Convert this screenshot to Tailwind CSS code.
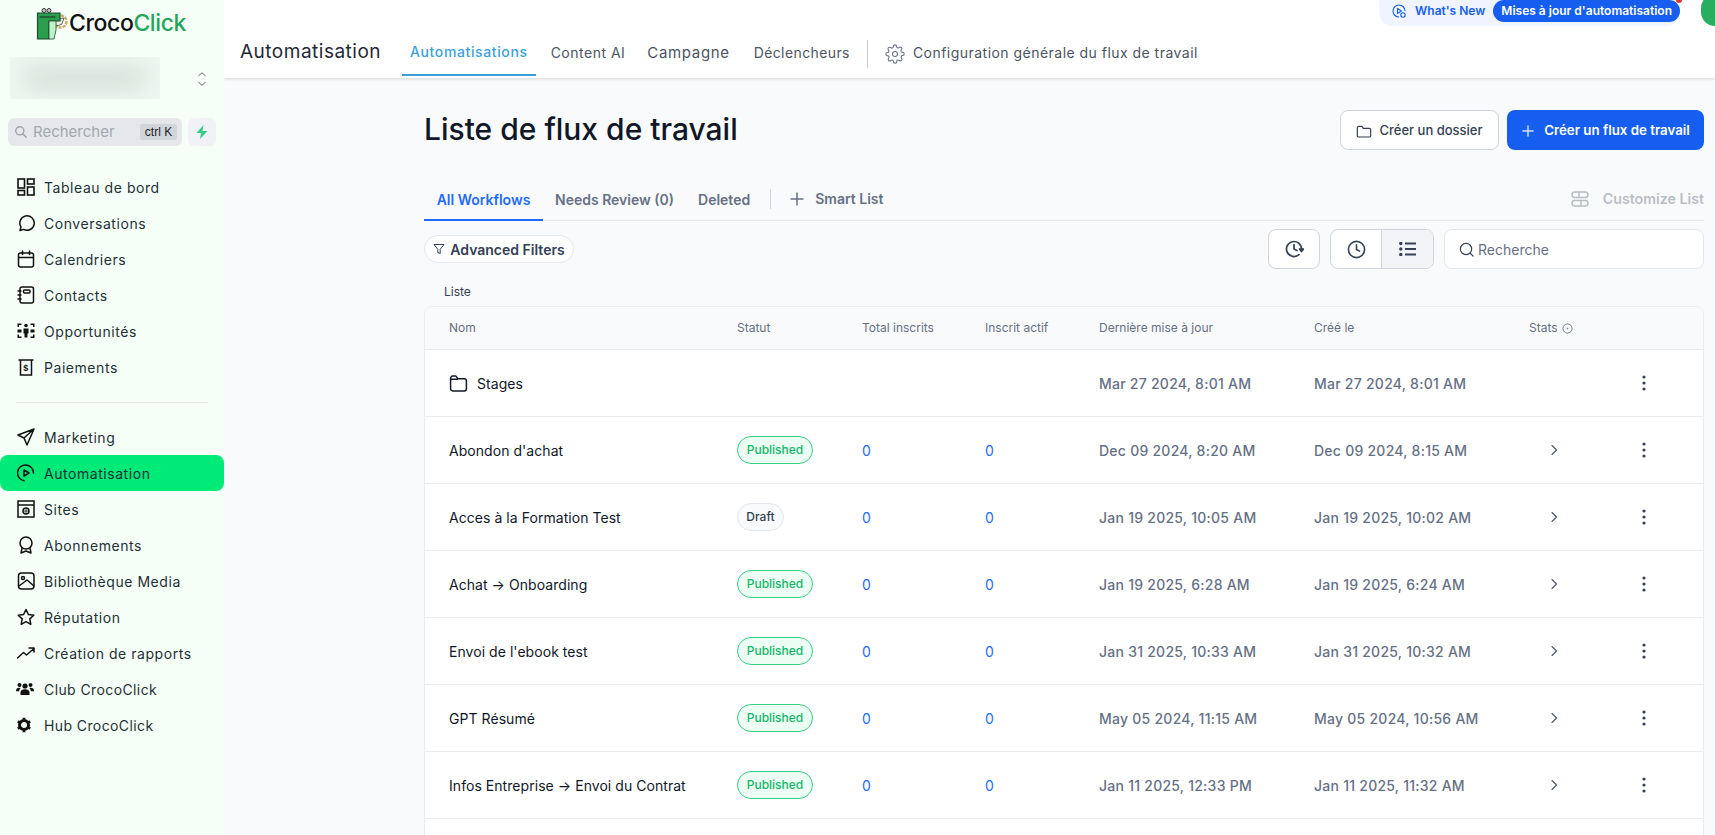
<!DOCTYPE html>
<html lang="fr">
<head>
  <meta charset="UTF-8" />
  <title>Automatisation | CrocoClick</title>
  <script src="https://cdn.jsdelivr.net/npm/@tailwindcss/browser@4"></script>
</head>
<body class="bg-[#f9fafb] font-['Inter',sans-serif] h-[835px] overflow-hidden flex">

  <!-- Sidebar -->
  <aside class="w-[224px] h-[835px] shrink-0 bg-[#f5fff8] text-[#1f3036]">
    <div class="h-[46px] pt-[8px] pl-[36px] flex items-start gap-[1px]">
      <svg width="32" height="32" viewBox="0 0 32 32">
        <circle cx="24.500" cy="13.500" r="6" fill="#fff" stroke="#c9ab6b" stroke-width="2.400" stroke-dasharray="3 1"/>
        <path d="M19 11 L28 10 L26 16 Q22 19 19 17 Z" fill="#ece8dc" stroke="#444" stroke-width="0.800"/>
        <circle cx="8" cy="2.500" r="2" fill="#c8c8c8" stroke="#333"/>
        <circle cx="13" cy="2.500" r="2" fill="#c8c8c8" stroke="#333"/>
        <path d="M1.500 5 H24 V13 H13 V31 H1.500 Z" fill="#2a9d4f" stroke="#1e4d2e" stroke-width="1.200"/>
        <path d="M13 13 H20 V22 L18 31 H13 Z" fill="#bdf3c8" stroke="#1e4d2e" stroke-width="0.800"/>
        <path d="M3.500 9h16" stroke="#1e4d2e" stroke-width="1.400"/>
      </svg>
      <div class="text-[23px] leading-[28px] mt-[1px] font-medium tracking-[-0.4px] text-[#111]">Croco<span class="text-[#25a55c]">Click</span></div>
    </div>

    <!-- Blurred location switcher -->
    <div class="mt-[11px] ml-[10px] flex items-center">
      <div class="w-[150px] h-[42px] bg-[#eef7f1] overflow-hidden flex items-center justify-center">
        <div class="w-[120px] h-[18px] bg-[#cfd8d2] blur-md"></div>
      </div>
      <svg class="ml-[37px] mt-[2px]" width="10" height="16" viewBox="0 0 12 18" fill="none" stroke="#667" stroke-width="1.200" stroke-linecap="round" stroke-linejoin="round"><path d="M2 5l4-3.500L10 5"/><path d="M2 13l4 3.500L10 13"/></svg>
    </div>

    <!-- Search -->
    <div class="mt-[19px] ml-[8px] flex gap-[6px]">
      <div class="w-[174px] h-[28px] bg-[#e5e7eb] rounded-[6px] flex items-center pl-[6px] pr-[5px]">
        <svg width="14" height="14" viewBox="0 0 24 24" fill="none" stroke="#9ca3af" stroke-width="2.400" stroke-linecap="round"><circle cx="10" cy="10" r="7"/><path d="M21 21l-6-6"/></svg>
        <span class="ml-[5px] text-[15px] text-[#a3a8ae]">Rechercher</span>
        <span class="ml-auto h-[16px] w-[37px] bg-[#d1d5db] rounded-[2px] text-[12px] leading-[16px] text-center text-[#222] font-['Liberation_Sans',sans-serif]">ctrl K</span>
      </div>
      <div class="w-[28px] h-[28px] bg-[#f0f2f5] rounded-[6px] flex items-center justify-center">
        <svg width="12" height="14" viewBox="0 0 12 14" fill="#37ca8b"><path d="M7.500 0L0.500 8H5L4 14L11.500 6H6.500Z"/></svg>
      </div>
    </div>

    <!-- Navigation -->
    <nav class="mt-[23px] text-[14px] tracking-[0.55px]">
      <a class="h-[36px] pl-[17px] flex items-center gap-[9px]">
        <svg class="w-[18px] h-[18px] shrink-0" viewBox="0 0 18 18" fill="none" stroke="#111" stroke-width="1.600"><rect x="1" y="1" width="6.500" height="9"/><rect x="10.500" y="1" width="6.500" height="5"/><rect x="1" y="12.500" width="6.500" height="4.500"/><rect x="10.500" y="9" width="6.500" height="8"/></svg>
        Tableau de bord</a>
      <a class="h-[36px] pl-[17px] flex items-center gap-[9px]">
        <svg class="w-[18px] h-[18px] shrink-0" viewBox="0 0 18 18" fill="none" stroke="#111" stroke-width="1.500" stroke-linejoin="round"><path d="M3 16.500l1-3.500a7.200 7.200 0 1 1 2.600 2.400Z"/></svg>
        Conversations</a>
      <a class="h-[36px] pl-[17px] flex items-center gap-[9px]">
        <svg class="w-[18px] h-[18px] shrink-0" viewBox="0 0 18 18" fill="none" stroke="#111" stroke-width="1.500" stroke-linecap="round"><rect x="1.500" y="3" width="15" height="14" rx="2"/><path d="M1.500 7.500h15M5.500 1v3.500M12.500 1v3.500"/></svg>
        Calendriers</a>
      <a class="h-[36px] pl-[17px] flex items-center gap-[9px]">
        <svg class="w-[18px] h-[18px] shrink-0" viewBox="0 0 18 18" fill="none" stroke="#111" stroke-width="1.500" stroke-linecap="round"><rect x="3" y="1" width="13.500" height="16" rx="2"/><rect x="6.500" y="4" width="6.500" height="3" rx="1"/><path d="M1 5h3M1 9h3M1 13h3"/></svg>
        Contacts</a>
      <a class="h-[36px] pl-[17px] flex items-center gap-[9px]">
        <svg class="w-[18px] h-[18px] shrink-0" viewBox="0 0 18 18" fill="#111"><circle cx="9" cy="3.500" r="1.800"/><path d="M6.500 6.500h5v5h-1v4h-3v-4h-1z"/><path d="M0.500 1.500h4v1.500h-2.500v2h-1.500zM13.500 1.500h4v3.500H16V3h-2.500zM0.500 12.500h1.500v2h2.500v1.500h-4zM17.500 12.500H16v2h-2.500v1.500h4z"/><rect x="0.500" y="7.500" width="4" height="3"/><rect x="13.500" y="7.500" width="4" height="3"/></svg>
        Opportunités</a>
      <a class="h-[36px] pl-[17px] flex items-center gap-[9px]">
        <svg class="w-[18px] h-[18px] shrink-0" viewBox="0 0 18 18" fill="none" stroke="#111" stroke-width="1.500"><path d="M1.500 2h15M3.500 2v15h11V2"/><text x="9" y="13" text-anchor="middle" font-size="9" font-weight="700" fill="#111" stroke="none" font-family="Liberation Sans">$</text></svg>
        Paiements</a>

      <div class="mt-[17px] mb-[16px] mx-[16px] h-[1px] bg-[#e2e8e6]"></div>

      <a class="h-[36px] pl-[17px] flex items-center gap-[9px]">
        <svg class="w-[18px] h-[18px] shrink-0" viewBox="0 0 18 18" fill="none" stroke="#111" stroke-width="1.500" stroke-linejoin="round"><path d="M17 1L1 7l6 3 3 7zM17 1L7 10"/></svg>
        Marketing</a>
      <a class="h-[36px] pl-[17px] flex items-center gap-[9px] bg-[#00ea78] rounded-[8px]">
        <svg class="w-[18px] h-[18px] shrink-0" viewBox="0 0 18 18" fill="none" stroke="#111" stroke-width="1.500" stroke-linejoin="round" stroke-linecap="round"><path d="M16.500 9A8 8 0 1 0 7 16.800"/><path d="M7 6l5 3-5 3z"/></svg>
        Automatisation</a>
      <a class="h-[36px] pl-[17px] flex items-center gap-[9px]">
        <svg class="w-[18px] h-[18px] shrink-0" viewBox="0 0 18 18" fill="none" stroke="#111" stroke-width="1.500"><rect x="1" y="1" width="16" height="16"/><path d="M1 5h16"/><circle cx="9" cy="11" r="3"/><path d="M6 11h6M9 8v6" stroke-width="0.800"/></svg>
        Sites</a>
      <a class="h-[36px] pl-[17px] flex items-center gap-[9px]">
        <svg class="w-[18px] h-[18px] shrink-0" viewBox="0 0 18 18" fill="none" stroke="#111" stroke-width="1.500" stroke-linejoin="round"><circle cx="9" cy="7" r="6"/><path d="M5 12l-1 5 5-2 5 2-1-5"/></svg>
        Abonnements</a>
      <a class="h-[36px] pl-[17px] flex items-center gap-[9px]">
        <svg class="w-[18px] h-[18px] shrink-0" viewBox="0 0 18 18" fill="none" stroke="#111" stroke-width="1.500" stroke-linejoin="round"><rect x="1.500" y="1" width="15.500" height="16" rx="3"/><circle cx="6" cy="6" r="1.500"/><path d="M2 14l8-6 7 6"/></svg>
        Bibliothèque Media</a>
      <a class="h-[36px] pl-[17px] flex items-center gap-[9px]">
        <svg class="w-[18px] h-[18px] shrink-0" viewBox="0 0 18 18" fill="none" stroke="#111" stroke-width="1.500" stroke-linejoin="round"><path d="M9 1.500l2.400 5 5.400.7-4 3.700 1 5.400L9 13.700l-4.800 2.600 1-5.400-4-3.700 5.400-.7z"/></svg>
        Réputation</a>
      <a class="h-[36px] pl-[17px] flex items-center gap-[9px]">
        <svg class="w-[18px] h-[18px] shrink-0" viewBox="0 0 18 18" fill="none" stroke="#111" stroke-width="1.500" stroke-linecap="round" stroke-linejoin="round"><path d="M0.500 14l6-5.500 3 2.500 7.500-6.500M12 4h5v4"/></svg>
        Création de rapports</a>
      <a class="h-[36px] pl-[16px] flex items-center gap-[10px] tracking-[0.4px]">
        <svg class="w-[18px] h-[18px] shrink-0" viewBox="0 0 18 18" fill="#111"><circle cx="9" cy="6" r="2.600"/><circle cx="3.500" cy="5" r="2"/><circle cx="14.500" cy="5" r="2"/><path d="M4.500 15v-2.500c0-2 2-3.200 4.500-3.200s4.500 1.200 4.500 3.200V15zM0 11c0-2 1.300-3.200 3.300-3.200.5 0 1 .1 1.400.3-1 .8-1.500 2-1.500 3.200H0zM18 11c0-2-1.300-3.200-3.300-3.200-.5 0-1 .1-1.400.3 1 .8 1.500 2 1.500 3.200H18z"/></svg>
        Club CrocoClick</a>
      <a class="h-[36px] pl-[16px] flex items-center gap-[10px] tracking-[0.4px]">
        <svg class="w-[18px] h-[18px] shrink-0" viewBox="0 0 18 18"><circle cx="8" cy="9" r="4.500" fill="none" stroke="#111" stroke-width="3"/><path d="M8 1.800v2.400M8 13.800v2.400M1.800 5.400l2 1.200M12.200 11.400l2 1.200M1.800 12.600l2-1.200M12.200 6.600l2-1.200" stroke="#111" stroke-width="2.600"/></svg>
        Hub CrocoClick</a>
    </nav>
  </aside>

  <!-- Main column -->
  <div class="flex-1 min-w-0 h-[835px] overflow-hidden">

    <!-- Top bar -->
    <header class="h-[78px] bg-white shadow-[0_1px_3px_rgba(0,0,0,0.15)] relative pt-[36px] pl-[16px] flex items-start">
      <div class="absolute top-0 right-[35px] h-[26px] pl-[12px] bg-[#eff4ff] rounded-b-[14px] flex items-start gap-[8px]">
        <svg class="mt-[3px]" width="16" height="16" viewBox="0 0 16 16" fill="none" stroke="#155eef" stroke-width="1.100" stroke-linejoin="round"><path d="M14 8A6 6 0 1 0 8 14"/><path d="M6.500 5.500L10.500 8l-4 2.500z"/><circle cx="12" cy="12" r="2.200"/></svg>
        <span class="text-[12px] leading-[22px] font-semibold text-[#155eef]">What's New</span>
        <span class="h-[22px] px-[8px] bg-[#155eef] rounded-[11px] text-white text-[12px] leading-[22px] font-semibold">Mises à jour d'automatisation</span>
        <span class="absolute right-[-2px] top-[-3px] w-[6px] h-[6px] rounded-full bg-[#e5342b]"></span>
      </div>
      <div class="absolute top-[-6px] right-[-14px] w-[28px] h-[32px] rounded-full bg-[#27ae60]"></div>

      <h1 class="text-[19px] leading-[32px] tracking-[0.5px] text-[#1f2937]">Automatisation</h1>
      <nav class="ml-[21px] flex items-start text-[14px] tracking-[0.62px] text-[#4b5563]">
        <a class="h-[40px] px-[8px] leading-[32px] border-b-2 border-[#3b9fdc] text-[#3b9fdc] font-medium">Automatisations</a>
        <a class="ml-[15px] leading-[34px] tracking-[0.5px]">Content AI</a>
        <a class="ml-[22px] leading-[34px] text-[15px] tracking-[0.65px]">Campagne</a>
        <a class="ml-[24px] leading-[34px] tracking-[0.4px]">Déclencheurs</a>
        <span class="ml-[17px] mt-[4px] w-[1px] h-[28px] bg-[#c7cbd1]"></span>
        <svg class="ml-[17px] mt-[8px]" width="20" height="20" viewBox="0 0 24 24" fill="none" stroke="#667085" stroke-width="1.300" stroke-linejoin="round"><circle cx="12" cy="12" r="3"/><path d="M19.400 15a1.650 1.650 0 0 0 .33 1.820l.06.06a2 2 0 1 1-2.830 2.830l-.06-.06a1.650 1.650 0 0 0-2.800 1.170V21a2 2 0 1 1-4 0v-.09a1.650 1.650 0 0 0-2.800-1.170l-.06.06a2 2 0 1 1-2.830-2.830l.06-.06a1.650 1.650 0 0 0-1.170-2.800H3a2 2 0 1 1 0-4h.09a1.650 1.650 0 0 0 1.170-2.800l-.06-.06a2 2 0 1 1 2.830-2.830l.06.06a1.650 1.650 0 0 0 2.800-1.170V3a2 2 0 1 1 4 0v.09a1.650 1.650 0 0 0 2.800 1.170l.06-.06a2 2 0 1 1 2.830 2.830l-.06.06a1.650 1.650 0 0 0 1.170 2.800H21a2 2 0 1 1 0 4h-.09a1.650 1.650 0 0 0-1.510 1z"/></svg>
        <a class="ml-[8px] leading-[34px] tracking-[0.47px]">Configuration générale du flux de travail</a>
      </nav>
    </header>

    <main class="pl-[200px] pr-[11px]">
      <!-- Title row -->
      <div class="pt-[32px] flex items-start">
        <h2 class="text-[30px] leading-[38px] font-medium text-[#101828]">Liste de flux de travail</h2>
        <button class="ml-auto w-[159px] h-[40px] pt-[1px] bg-white border border-[#d0d5dd] rounded-[8px] flex items-center justify-center gap-[7px] text-[13px] font-medium text-[#344054]">
          <svg width="16" height="16" viewBox="0 0 24 24" fill="none" stroke="#344054" stroke-width="1.800" stroke-linejoin="round"><path d="M2 7a2 2 0 0 1 2-2h5l2 3h9a2 2 0 0 1 2 2v9a2 2 0 0 1-2 2H4a2 2 0 0 1-2-2z"/></svg>
          Créer un dossier</button>
        <button class="ml-[8px] w-[197px] h-[40px] pt-[1px] bg-[#155eef] rounded-[8px] flex items-center justify-center gap-[9px] text-[13.300px] font-semibold text-white">
          <svg width="14" height="14" viewBox="0 0 14 14" fill="none" stroke="#cfe0ff" stroke-width="1.500" stroke-linecap="round"><path d="M7 2v10M2 7h10"/></svg>
          Créer un flux de travail</button>
      </div>

      <!-- Tabs -->
      <div class="mt-[20px] h-[51px] border-b border-[#e4e7ec] flex items-stretch text-[14px] font-semibold">
        <a class="w-[119px] border-b-2 border-[#1e6bff] mb-[-1px] text-[#1e6bff] text-center leading-[60px]">All Workflows</a>
        <a class="ml-[12px] text-[#667085] leading-[60px]">Needs Review (0)</a>
        <a class="ml-[24px] text-[#667085] leading-[60px]">Deleted</a>
        <span class="ml-[20px] mt-[19px] w-[1px] h-[20px] bg-[#d0d5dd]"></span>
        <svg class="ml-[19px] mt-[22px]" width="14" height="14" viewBox="0 0 14 14" fill="none" stroke="#667085" stroke-width="1.500"><path d="M7 0.500v13M0.500 7h13"/></svg>
        <a class="ml-[11px] text-[#667085] leading-[58px]">Smart List</a>
        <div class="ml-auto flex items-center gap-[14px] text-[#b9bdc6] pt-[8px] text-[14.200px]">
          <svg width="18" height="18" viewBox="0 0 18 18" fill="none" stroke="#b9bdc6" stroke-width="1.500"><rect x="1" y="2" width="16" height="5.500" rx="2.700"/><rect x="1" y="10.500" width="16" height="5.500" rx="2.700"/><path d="M8 2v5.500M10 10.500v5.500"/></svg>
          <span>Customize List</span>
        </div>
      </div>

      <!-- Filters -->
      <div class="h-[63px] flex items-start">
        <button class="mt-[14px] w-[150px] h-[28px] bg-white border border-[#e4e7ec] rounded-full flex items-center justify-center gap-[5px] text-[14px] font-semibold text-[#344054]">
          <svg width="12" height="12" viewBox="0 0 12 12" fill="none" stroke="#344054" stroke-width="1" stroke-linejoin="round"><path d="M1 1.500h10L7.200 6.300V10.500L4.800 9.500V6.300z"/></svg>
          Advanced Filters</button>
        <button class="ml-auto mt-[8px] w-[52px] h-[40px] bg-white border border-[#d0d5dd] rounded-[8px] flex items-center justify-center">
          <svg width="20" height="20" viewBox="0 0 20 20" fill="none" stroke="#344054" stroke-width="1.700" stroke-linecap="round" stroke-linejoin="round"><path d="M17.500 10A7.500 7.500 0 1 0 15 15.600"/><path d="M10 5.500V10l3 1.500"/><path d="M15.500 10h4l-2 2.500z" fill="#344054"/></svg>
        </button>
        <div class="ml-[10px] mt-[8px] w-[104px] h-[40px] bg-white border border-[#d0d5dd] rounded-[8px] overflow-hidden flex">
          <div class="w-[51px] flex items-center justify-center border-r border-[#d0d5dd]">
            <svg width="19" height="19" viewBox="0 0 20 20" fill="none" stroke="#344054" stroke-width="1.700" stroke-linecap="round" stroke-linejoin="round"><circle cx="10" cy="10" r="8.500"/><path d="M10 5v5l3.300 1.700"/></svg>
          </div>
          <div class="flex-1 bg-[#f2f4f7] flex items-center justify-center">
            <svg width="18" height="14" viewBox="0 0 18 14" fill="#344054" stroke="#344054" stroke-width="1.800"><path d="M6 1.500h11M6 7h11M6 12.500h11" fill="none"/><circle cx="1.800" cy="1.500" r="0.800"/><circle cx="1.800" cy="7" r="0.800"/><circle cx="1.800" cy="12.500" r="0.800"/></svg>
          </div>
        </div>
        <div class="ml-[10px] mt-[8px] w-[260px] h-[40px] bg-white border border-[#e4e7ec] rounded-[8px] flex items-center pl-[14px] gap-[4px] text-[14px] text-[#667085]">
          <svg width="15" height="15" viewBox="0 0 16 16" fill="none" stroke="#344054" stroke-width="1.300" stroke-linecap="round"><circle cx="7.500" cy="7.500" r="6"/><path d="M12 12l3 3"/></svg>
          Recherche
        </div>
      </div>

      <div class="h-[22px] pl-[20px] text-[12px] leading-[16px] text-[#344054]">Liste</div>

      <!-- Table -->
      <div class="bg-white border border-[#e9ebef] rounded-t-[8px] overflow-hidden">
        <div class="h-[43px] bg-[#f9fafb] border-b border-[#e9ebef] grid grid-cols-[288px_125px_123px_114px_215px_215px_1fr] items-center pl-[24px] text-[12px] text-[#667085]">
          <div>Nom</div>
          <div>Statut</div>
          <div>Total inscrits</div>
          <div>Inscrit actif</div>
          <div>Dernière mise à jour</div>
          <div>Créé le</div>
          <div class="flex items-center gap-[4px]">Stats
            <svg width="11" height="11" viewBox="0 0 12 12" fill="none" stroke="#667085" stroke-width="1"><circle cx="6" cy="6" r="5"/><circle cx="6" cy="6" r="0.500" fill="#667085"/></svg>
          </div>
        </div>
        <div id="rows"></div>
      </div>
    </main>
  </div>

  <script>
    const workflows = [
      { name: "Stages", folder: true, updated: "Mar 27 2024, 8:01 AM", created: "Mar 27 2024, 8:01 AM" },
      { name: "Abondon d'achat", status: "Published", updated: "Dec 09 2024, 8:20 AM", created: "Dec 09 2024, 8:15 AM" },
      { name: "Acces à la Formation Test", status: "Draft", updated: "Jan 19 2025, 10:05 AM", created: "Jan 19 2025, 10:02 AM" },
      { name: "Achat → Onboarding", status: "Published", updated: "Jan 19 2025, 6:28 AM", created: "Jan 19 2025, 6:24 AM" },
      { name: "Envoi de l'ebook test", status: "Published", updated: "Jan 31 2025, 10:33 AM", created: "Jan 31 2025, 10:32 AM" },
      { name: "GPT Résumé", status: "Published", updated: "May 05 2024, 11:15 AM", created: "May 05 2024, 10:56 AM" },
      { name: "Infos Entreprise → Envoi du Contrat", status: "Published", updated: "Jan 11 2025, 12:33 PM", created: "Jan 11 2025, 11:32 AM" },
      { name: "", empty: true, updated: "", created: "" }
    ];

    const folderIcon = `<svg class="mr-[9px]" width="19" height="19" viewBox="0 0 18 18" fill="none" stroke="#101828" stroke-width="1.400" stroke-linejoin="round"><path d="M1.500 4a2 2 0 0 1 2-2h3l2 2.500h6a2 2 0 0 1 2 2V14a2 2 0 0 1-2 2h-11a2 2 0 0 1-2-2z"/><path d="M1.500 5h7"/></svg>`;
    const chevron = `<svg class="ml-[21px]" width="8" height="12" viewBox="0 0 8 12" fill="none" stroke="#475467" stroke-width="1.100" stroke-linecap="round" stroke-linejoin="round"><path d="M2 1.500L6.500 6 2 10.500"/></svg>`;
    const dots = `<svg class="absolute left-[113px] top-1/2 -translate-y-1/2" width="4" height="16" viewBox="0 0 4 16" fill="#344054"><circle cx="2" cy="2" r="1.600"/><circle cx="2" cy="8" r="1.600"/><circle cx="2" cy="14" r="1.600"/></svg>`;

    function badge(status) {
      if (status === "Published") {
        return `<span class="inline-block h-[28px] w-[76px] rounded-full border border-[#36cf86] bg-[#ecfdf3] text-[#12b76a] text-[12px] leading-[26px] text-center font-medium">Published</span>`;
      }
      if (status === "Draft") {
        return `<span class="inline-block h-[28px] w-[47px] rounded-full border border-[#e4e7ec] bg-[#f9fafb] text-[#344054] text-[12px] leading-[26px] text-center font-medium">Draft</span>`;
      }
      return "";
    }

    function renderRows(list) {
      const container = document.getElementById("rows");
      container.innerHTML = "";
      list.forEach(w => {
        if (w.empty) {
          container.innerHTML += `<div class="h-[67px]"></div>`;
          return;
        }
        const count = w.folder ? "" : `<span class="text-[#1e6bff] text-[14px]">0</span>`;
        container.innerHTML += `
          <div class="h-[67px] border-b border-[#e9ebef] grid grid-cols-[288px_125px_123px_114px_215px_215px_1fr] items-center pl-[24px] text-[14px]">
            <div class="flex items-center text-[#101828] tracking-[0.05px]">${w.folder ? folderIcon : ""}${w.name}</div>
            <div>${badge(w.status)}</div>
            <div>${count}</div>
            <div>${count}</div>
            <div class="text-[#667085] font-medium tracking-[0.25px]">${w.updated}</div>
            <div class="text-[#667085] font-medium tracking-[0.25px]">${w.created}</div>
            <div class="relative h-full flex items-center">${w.folder ? "" : chevron}${dots}</div>
          </div>`;
      });
    }

    renderRows(workflows);
  </script>
</body>
</html>
